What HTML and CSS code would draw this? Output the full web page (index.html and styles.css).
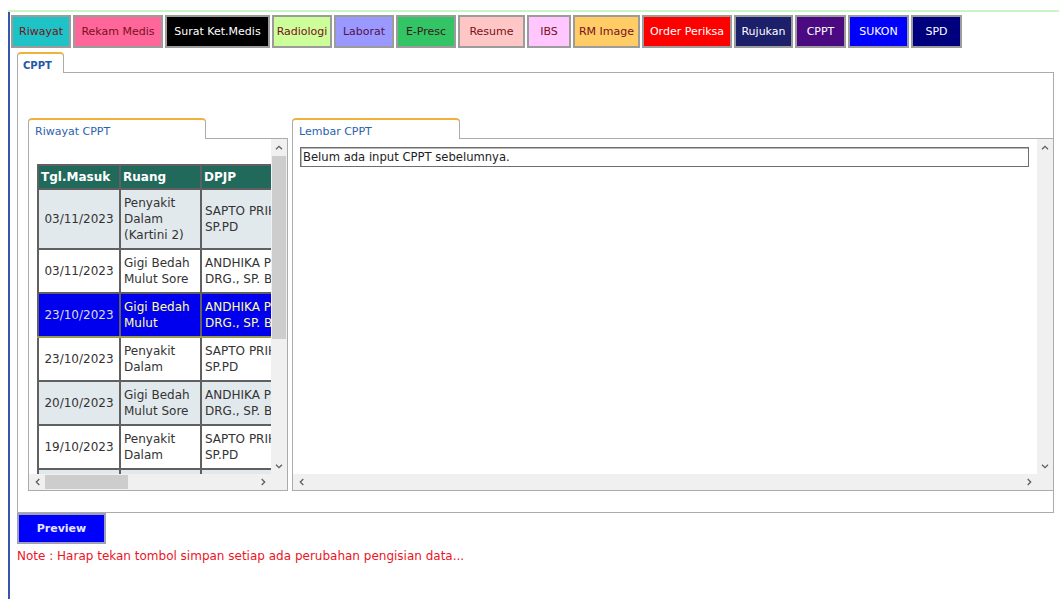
FILE: index.html
```html
<!DOCTYPE html>
<html lang="id">
<head>
<meta charset="utf-8">
<title>CPPT</title>
<link rel="stylesheet" href="styles.css">
</head>
<body>
<div class="frame">
  <div class="frame-body">
    <nav class="menu">
      <a class="menu-btn b-riwayat">Riwayat</a>
      <a class="menu-btn b-rekam">Rekam Medis</a>
      <a class="menu-btn b-surat">Surat Ket.Medis</a>
      <a class="menu-btn b-radiologi">Radiologi</a>
      <a class="menu-btn b-laborat">Laborat</a>
      <a class="menu-btn b-epresc">E-Presc</a>
      <a class="menu-btn b-resume">Resume</a>
      <a class="menu-btn b-ibs">IBS</a>
      <a class="menu-btn b-rmimage">RM Image</a>
      <a class="menu-btn b-order">Order Periksa</a>
      <a class="menu-btn b-rujukan">Rujukan</a>
      <a class="menu-btn b-cppt">CPPT</a>
      <a class="menu-btn b-sukon">SUKON</a>
      <a class="menu-btn b-spd">SPD</a>
    </nav>

    <section class="cppt">
      <div class="tabstrip">
        <span class="tab tab-main">CPPT</span>
      </div>
      <div class="outer-panel">
        <div class="split">
          <!-- history list -->
          <div class="pane pane-left">
            <div class="tabstrip">
              <span class="tab tab-sub tab-riwayat">Riwayat CPPT</span>
            </div>
            <div class="pane-body scrollbox">
              <div class="viewport viewport-list">
                <table class="history">
                  <colgroup>
                    <col class="c-date"><col class="c-room"><col class="c-doc">
                  </colgroup>
                  <thead>
                    <tr><th>Tgl.Masuk</th><th>Ruang</th><th>DPJP</th></tr>
                  </thead>
                  <tbody>
                    <tr class="alt"><td class="date">03/11/2023</td><td>Penyakit Dalam (Kartini 2)</td><td>SAPTO PRIHARTONO, SP.PD</td></tr>
                    <tr><td class="date">03/11/2023</td><td>Gigi Bedah Mulut Sore</td><td>ANDHIKA PRASETYA, DRG., SP. BM</td></tr>
                    <tr class="selected"><td class="date">23/10/2023</td><td>Gigi Bedah Mulut</td><td>ANDHIKA PRASETYA, DRG., SP. BM</td></tr>
                    <tr><td class="date">23/10/2023</td><td>Penyakit Dalam</td><td>SAPTO PRIHARTONO, SP.PD</td></tr>
                    <tr class="alt"><td class="date">20/10/2023</td><td>Gigi Bedah Mulut Sore</td><td>ANDHIKA PRASETYA, DRG., SP. BM</td></tr>
                    <tr><td class="date">19/10/2023</td><td>Penyakit Dalam</td><td>SAPTO PRIHARTONO, SP.PD</td></tr>
                    <tr class="alt"><td class="date">19/10/2023</td><td>Penyakit Dalam</td><td>SAPTO PRIHARTONO, SP.PD</td></tr>
                  </tbody>
                </table>
              </div>
              <div class="vbar">
                <span class="sb-btn"><svg width="8" height="5" viewBox="0 0 8 5"><path d="M1 4.3 4 1.3 7 4.3" fill="none" stroke="#5f5f5f" stroke-width="1.3"/></svg></span>
                <span class="sb-thumb vthumb-list"></span>
                <span class="sb-track"></span>
                <span class="sb-btn"><svg width="8" height="5" viewBox="0 0 8 5"><path d="M1 0.7 4 3.7 7 0.7" fill="none" stroke="#5f5f5f" stroke-width="1.3"/></svg></span>
              </div>
              <div class="hbar">
                <span class="sb-btn"><svg width="5" height="8" viewBox="0 0 5 8"><path d="M4.3 1 1.3 4 4.3 7" fill="none" stroke="#5f5f5f" stroke-width="1.3"/></svg></span>
                <span class="sb-thumb hthumb-list"></span>
                <span class="sb-track"></span>
                <span class="sb-btn"><svg width="5" height="8" viewBox="0 0 5 8"><path d="M0.7 1 3.7 4 0.7 7" fill="none" stroke="#5f5f5f" stroke-width="1.3"/></svg></span>
              </div>
              <div class="corner"></div>
            </div>
          </div>

          <!-- current sheet -->
          <div class="pane pane-right">
            <div class="tabstrip">
              <span class="tab tab-sub tab-lembar">Lembar CPPT</span>
            </div>
            <div class="pane-body scrollbox">
              <div class="viewport viewport-sheet">
                <div class="sheet-field">Belum ada input CPPT sebelumnya.</div>
              </div>
              <div class="vbar">
                <span class="sb-btn"><svg width="8" height="5" viewBox="0 0 8 5"><path d="M1 4.3 4 1.3 7 4.3" fill="none" stroke="#5f5f5f" stroke-width="1.3"/></svg></span>
                <span class="sb-track"></span>
                <span class="sb-btn"><svg width="8" height="5" viewBox="0 0 8 5"><path d="M1 0.7 4 3.7 7 0.7" fill="none" stroke="#5f5f5f" stroke-width="1.3"/></svg></span>
              </div>
              <div class="hbar">
                <span class="sb-btn"><svg width="5" height="8" viewBox="0 0 5 8"><path d="M4.3 1 1.3 4 4.3 7" fill="none" stroke="#5f5f5f" stroke-width="1.3"/></svg></span>
                <span class="sb-track"></span>
                <span class="sb-btn"><svg width="5" height="8" viewBox="0 0 5 8"><path d="M0.7 1 3.7 4 0.7 7" fill="none" stroke="#5f5f5f" stroke-width="1.3"/></svg></span>
              </div>
              <div class="corner"></div>
            </div>
          </div>
        </div>
      </div>

      <button class="preview" type="button">Preview</button>
      <p class="note">Note : Harap tekan tombol simpan setiap ada perubahan pengisian data...</p>
    </section>
  </div>
</div>
</body>
</html>
```

FILE: styles.css
```css
html, body {
  margin: 0;
  padding: 0;
  background: #fff;
}

body {
  font-family: "DejaVu Sans", Verdana, sans-serif;
  font-size: 11px;
  color: #222;
}

/* outer frame: green rule on top, blue rule on the left */
.frame {
  margin: 10px 0 0 8px;
  border-top: 2px solid #c9f5c4;
}

.frame-body {
  border-left: 2px solid #3857a8;
  min-height: calc(100vh - 12px);
  padding-top: 3px;
}

/* coloured module buttons */
.menu {
  display: flex;
  gap: 2px;
  margin-left: 1px;
}

.menu-btn {
  box-sizing: border-box;
  height: 33px;
  line-height: 29px;
  border: 2px solid #9c9c9c;
  text-align: center;
  color: #7a1020;
  white-space: nowrap;
  cursor: pointer;
}

.b-riwayat  { width: 60px;  background: #1dc3c6; }
.b-rekam    { width: 90px;  background: #ff6699; }
.b-surat    { width: 105px; background: #000;    color: #fff; }
.b-radiologi{ width: 60px;  background: #ccff99; }
.b-laborat  { width: 60px;  background: #9999ff; color: #5a1050; }
.b-epresc   { width: 60px;  background: #33c466; color: #3a1a1a; }
.b-resume   { width: 67px;  background: #ffc6c6; }
.b-ibs      { width: 44px;  background: #ffc6ff; }
.b-rmimage  { width: 67px;  background: #ffcc66; }
.b-order    { width: 90px;  background: #ff0000; color: #fff; }
.b-rujukan  { width: 59px;  background: #1c1f6a; color: #fff; }
.b-cppt     { width: 51px;  background: #4b0a82; color: #fff; }
.b-sukon    { width: 61px;  background: #0000ff; color: #fff; }
.b-spd      { width: 51px;  background: #00007f; color: #fff; }

/* CPPT section */
.cppt {
  margin: 4px 5px 0 7px;
}

.tabstrip {
  display: flex;
  border-bottom: 1px solid #ababab;
}

.tab {
  box-sizing: border-box;
  display: block;
  height: 21px;
  margin-bottom: -1px;
  background: #fff;
  border: 1px solid #ababab;
  border-top: 2px solid #f1b23c;
  border-bottom: 0;
  border-radius: 4px 4px 0 0;
  line-height: 13px;
}

.tab-main {
  width: 47px;
  padding: 5px 0 0 5px;
  font-size: 10px;
  font-weight: bold;
  color: #2358a6;
}

.tab-sub {
  padding: 5px 0 0 6px;
  color: #2a62b0;
}

.tab-riwayat { width: 178px; }
.tab-lembar  { width: 168px; }

.outer-panel {
  border: 1px solid #ababab;
  border-top: 0;
  padding: 45px 0 21px 10px;
}

.split {
  display: flex;
  gap: 4px;
}

.pane-left  { width: 260px; flex: none; }
.pane-right { flex: 1; min-width: 0; }

.pane-body {
  border: 1px solid #ababab;
  border-top: 0;
}

.pane-right .pane-body { border-right: 0; }

/* scroll area with its own bars */
.scrollbox {
  display: grid;
  grid-template-columns: 1fr 16px;
  grid-template-rows: 335px 16px;
}

.viewport {
  overflow: hidden;
  min-width: 0;
}

.viewport-list  { padding: 25px 0 0 8px; }
.viewport-sheet { padding: 8px 0 0 7px; }

.vbar, .hbar {
  display: flex;
  background: #f0f0f0;
}

.vbar { flex-direction: column; }

.sb-btn {
  flex: none;
  width: 16px;
  height: 16px;
  display: flex;
  align-items: center;
  justify-content: center;
}

.sb-track { flex: 1; }

.sb-thumb { flex: none; background: #cdcdcd; }
.vthumb-list { height: 183px; margin: 1px 1px 0; }
.hthumb-list { width: 83px; margin: 1px 0; }

.corner { background: #f0f0f0; }

/* history table */
.history {
  border-collapse: collapse;
  table-layout: fixed;
  width: 313px;
  font-size: 12px;
  color: #333;
}

.c-date { width: 82px; }
.c-room { width: 81px; }
.c-doc  { width: 150px; }

.history th,
.history td {
  border: 2px solid #606060;
  line-height: 16px;
  text-align: left;
  vertical-align: middle;
}

.history th {
  background: #21695a;
  color: #fff;
  font-size: 12px;
  font-weight: bold;
  padding: 3px 2px;
  white-space: nowrap;
}

.history td {
  padding: 5px 3px;
}

.history td.date {
  text-align: center;
  padding: 5px 1px;
  white-space: nowrap;
}

.history tr.alt td { background: #e2e9ed; }

.history tr.selected td {
  background: #0000ee;
  color: #ffff9c;
  border-color: #9a9a4a #606060;
}

.history tr.selected td.date { color: #dcdcdc; }

/* current sheet field */
.sheet-field {
  box-sizing: border-box;
  width: 729px;
  height: 20px;
  border: 1px solid #6e6e6e;
  box-shadow: inset 1px 1px 0 #b8b8b8;
  padding: 1px 2px 0;
  font-size: 11.6px;
  line-height: 16px;
  color: #222;
  background: #fff;
}

/* footer actions */
.preview {
  display: block;
  box-sizing: border-box;
  width: 89px;
  height: 31px;
  margin: 0;
  border: 2px solid #a0a0b8;
  background: #0000ff;
  color: #e6e6ff;
  font: bold 11px "DejaVu Sans", Verdana, sans-serif;
  cursor: pointer;
}

.note {
  margin: 5px 0 0;
  font-size: 12px;
  color: #ec1426;
  line-height: 15px;
}
```
